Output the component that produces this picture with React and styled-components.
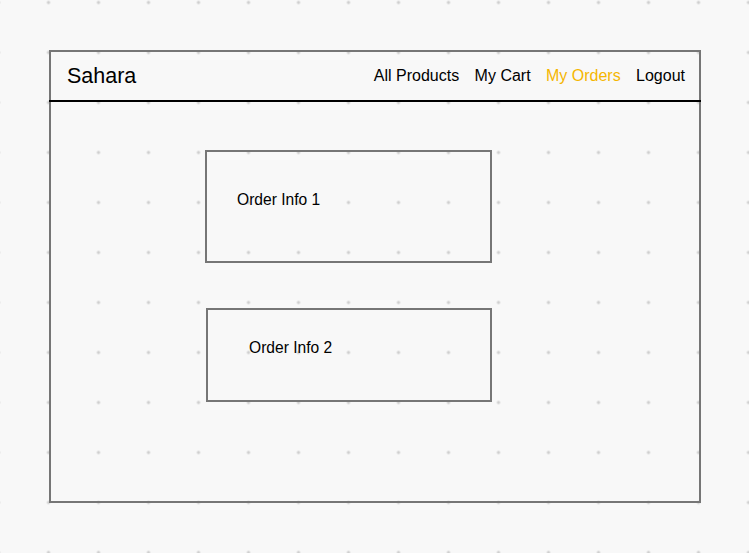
import styled, { createGlobalStyle } from 'styled-components';

const GlobalStyle = createGlobalStyle`
  html, body {
    margin: 0;
    padding: 0;
  }
  body {
    width: 749px;
    height: 553px;
    overflow: hidden;
    background-color: #f8f8f8;
    background-image: radial-gradient(circle at center, #cfcfcf 0, #cfcfcf 1.3px, transparent 1.9px);
    background-size: 50px 50px;
    background-position: 23.5px -22.5px;
    font-family: "Liberation Sans", Arial, sans-serif;
    color: #000;
  }
`;

const Page = styled.div`
  padding: 50px 0 0 49px;
`;

const Frame = styled.div`
  box-sizing: border-box;
  width: 652px;
  height: 453px;
  border: 2px solid #767676;
  display: flex;
  flex-direction: column;
`;

const Header = styled.header`
  height: 48px;
  border-bottom: 2px solid #000;
  display: flex;
  align-items: center;
  justify-content: space-between;
  margin: 0 -2px;
  padding: 0 16px 0 18px;
`;

const Brand = styled.div`
  font-size: 21.5px;
  line-height: 1;
  padding-top: 1px;
`;

const Nav = styled.nav`
  display: flex;
  gap: 15.4px;
  font-size: 16px;
  line-height: 1;
  margin-top: -1px;
`;

const NavLink = styled.a`
  color: ${({ $active }) => ($active ? '#f5b600' : '#000')};
  text-decoration: none;
`;

const Content = styled.main`
  display: flex;
  flex-direction: column;
  align-items: flex-start;
  padding-top: 48px;
  gap: 45px;
`;

const OrderCard = styled.section`
  box-sizing: border-box;
  width: ${({ $w }) => $w}px;
  height: ${({ $h }) => $h}px;
  margin-left: ${({ $left }) => $left}px;
  border: 2px solid #767676;
  padding: ${({ $top }) => $top}px 0 0 ${({ $pad }) => $pad}px;
  font-size: 15.6px;
  line-height: 18px;
`;

const orders = [
  { id: 1, label: 'Order Info 1', left: 154, w: 287, h: 113, top: 39, pad: 30 },
  { id: 2, label: 'Order Info 2', left: 155, w: 286, h: 94, top: 29, pad: 41 },
];

export default function App() {
  return (
    <>
      <GlobalStyle />
      <Page>
        <Frame>
          <Header>
            <Brand>Sahara</Brand>
            <Nav>
              <NavLink>All Products</NavLink>
              <NavLink>My Cart</NavLink>
              <NavLink $active>My Orders</NavLink>
              <NavLink>Logout</NavLink>
            </Nav>
          </Header>
          <Content>
            {orders.map(o => (
              <OrderCard key={o.id} $left={o.left} $w={o.w} $h={o.h} $top={o.top} $pad={o.pad}>
                {o.label}
              </OrderCard>
            ))}
          </Content>
        </Frame>
      </Page>
    </>
  );
}
